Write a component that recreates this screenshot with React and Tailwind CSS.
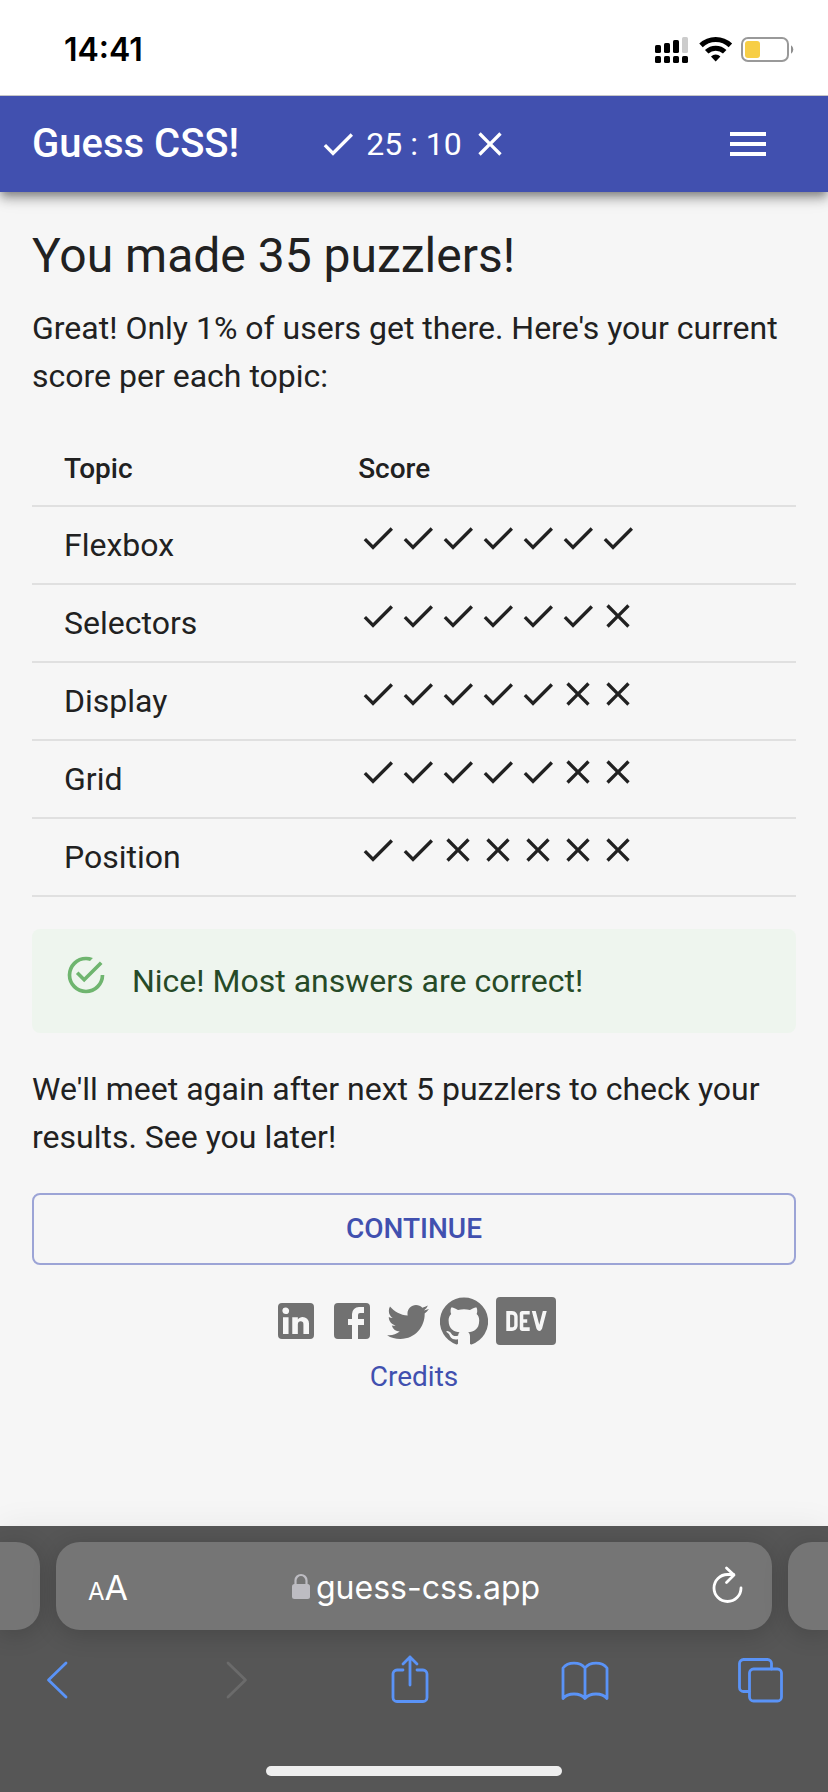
import React from "react";
import { FaDev } from "react-icons/fa";

const ICONS = {
  check: "M9 16.17L4.83 12l-1.42 1.41L9 19 21 7l-1.41-1.41z",
  close:
    "M19 6.41L17.59 5 12 10.59 6.41 5 5 6.41 10.59 12 5 17.59 6.41 19 12 13.41 17.59 19 19 17.59 13.41 12z",
  menu: "M3 18h18v-2H3v2zm0-5h18v-2H3v2zm0-7v2h18V6H3z",
  success:
    "M20 12a8 8 0 0 1-8 8 8 8 0 0 1-8-8 8 8 0 0 1 8-8c.76 0 1.5.11 2.2.31l1.57-1.57A9.822 9.822 0 0 0 12 2 10 10 0 0 0 2 12a10 10 0 0 0 10 10 10 10 0 0 0 10-10M7.91 10.08L6.5 11.5 11 16 21 6l-1.41-1.42L11 13.17l-3.09-3.09z",
  linkedin:
    "M19 3a2 2 0 0 1 2 2v14a2 2 0 0 1-2 2H5a2 2 0 0 1-2-2V5a2 2 0 0 1 2-2h14m-.5 15.5v-5.3a3.26 3.26 0 0 0-3.26-3.26c-.85 0-1.84.52-2.32 1.3v-1.11h-2.79v8.37h2.79v-4.93c0-.77.62-1.4 1.39-1.4a1.4 1.4 0 0 1 1.4 1.4v4.93h2.79M6.88 8.56a1.68 1.68 0 0 0 1.68-1.68c0-.93-.75-1.69-1.68-1.69a1.69 1.69 0 0 0-1.69 1.69c0 .93.76 1.68 1.69 1.68m1.39 9.94v-8.37H5.5v8.37h2.77z",
  facebook:
    "M5 3h14a2 2 0 0 1 2 2v14a2 2 0 0 1-2 2H5a2 2 0 0 1-2-2V5a2 2 0 0 1 2-2m13 2h-2.5A3.5 3.5 0 0 0 12 8.5V11h-2v3h2v7h3v-7h3v-3h-3V9a1 1 0 0 1 1-1h2V5z",
  twitter:
    "M22.46 6c-.77.35-1.6.58-2.46.69.88-.53 1.56-1.37 1.88-2.38-.83.5-1.75.85-2.72 1.05C18.37 4.5 17.26 4 16 4c-2.35 0-4.27 1.92-4.27 4.29 0 .34.04.67.11.98C8.28 9.09 5.11 7.38 3 4.79c-.37.63-.58 1.37-.58 2.15 0 1.49.75 2.81 1.91 3.56-.71 0-1.37-.2-1.95-.5v.03c0 2.08 1.48 3.82 3.44 4.21a4.22 4.22 0 0 1-1.93.07 4.28 4.28 0 0 0 4 2.98 8.521 8.521 0 0 1-5.33 1.84c-.34 0-.68-.02-1.02-.06C3.44 20.29 5.7 21 8.12 21 16 21 20.33 14.46 20.33 8.79c0-.19 0-.37-.01-.56.84-.6 1.56-1.36 2.14-2.23z",
  github:
    "M12 .3a12 12 0 0 0-3.8 23.4c.6.1.8-.3.8-.6v-2c-3.3.7-4-1.6-4-1.6-.6-1.4-1.4-1.8-1.4-1.8-1-.7.1-.7.1-.7 1.2 0 1.9 1.2 1.9 1.2 1 1.8 2.8 1.3 3.5 1 0-.8.4-1.3.7-1.6-2.7-.3-5.5-1.3-5.5-6 0-1.2.5-2.3 1.3-3.1-.2-.4-.6-1.6 0-3.2 0 0 1-.3 3.4 1.2a11.5 11.5 0 0 1 6 0c2.3-1.5 3.3-1.2 3.3-1.2.6 1.6.2 2.8 0 3.2.9.8 1.3 1.9 1.3 3.2 0 4.6-2.8 5.6-5.5 5.9.5.4.9 1 .9 2.2v3.3c0 .3.1.7.8.6A12 12 0 0 0 12 .3",
};

function Icon({ name, className }) {
  return (
    <svg viewBox="0 0 24 24" fill="currentColor" aria-hidden="true" className={`shrink-0 ${className}`}>
      <path d={ICONS[name]} />
    </svg>
  );
}

function StatusBar() {
  return (
    <div className="relative z-10 flex h-24 items-center justify-between border-b border-[#c6c6c8] bg-white pt-1 pr-8 pl-16 font-['Inter',sans-serif] text-black">
      <span className="text-[32px] leading-10 font-semibold">14:41</span>
      <svg viewBox="0 0 142 28" className="h-7 w-[142px]" aria-hidden="true">
        <g>
          <rect x="1" y="9" width="6" height="8" rx="1.6" />
          <rect x="10" y="7" width="6" height="10" rx="1.6" />
          <rect x="19" y="4" width="6" height="13" rx="1.6" />
          <rect x="28" y="1" width="6" height="16" rx="1.6" fill="#cccccc" />
          <rect x="1" y="20" width="6" height="7" rx="1.6" />
          <rect x="10" y="20" width="6" height="7" rx="1.6" />
          <rect x="19" y="20" width="6" height="7" rx="1.6" />
          <rect x="28" y="20" width="6" height="7" rx="1.6" />
        </g>
        <g fill="none" stroke="#000" strokeWidth="5">
          <path d="M47 9.4a21.2 21.2 0 0 1 29.4 0" />
          <path d="M52.7 15.8a13 13 0 0 1 18 0" />
        </g>
        <path d="M61.7 25.5 57 20.5a6.8 6.8 0 0 1 9.4 0z" />
        <rect x="88" y="2" width="46" height="23" rx="6" fill="none" stroke="#999" strokeWidth="2" />
        <rect x="91" y="5" width="15" height="17" rx="3" fill="#f7ce46" />
        <path d="M137 9.3a5 5 0 0 1 0 8.4z" fill="#8e8e8e" />
      </svg>
    </div>
  );
}

function AppBar() {
  return (
    <header className="relative grid h-24 grid-cols-[1fr_auto_1fr] items-center bg-[#4150af] px-8 text-white shadow-[0_4px_8px_-2px_rgba(0,0,0,0.3),0_8px_10px_rgba(0,0,0,0.2),0_2px_20px_rgba(0,0,0,0.14)]">
      <h1 className="text-[40px] leading-16 font-medium whitespace-nowrap">Guess CSS!</h1>
      <p className="flex items-center gap-2 text-[32px] leading-12 whitespace-nowrap">
        <Icon name="check" className="size-10" />
        25 : 10
        <Icon name="close" className="size-10" />
      </p>
      <button type="button" aria-label="Menu" className="justify-self-end p-6">
        <Icon name="menu" className="size-12" />
      </button>
    </header>
  );
}

const SCORES = [
  { topic: "Flexbox", right: 7 },
  { topic: "Selectors", right: 6 },
  { topic: "Display", right: 5 },
  { topic: "Grid", right: 5 },
  { topic: "Position", right: 2 },
];
const ROUNDS = [0, 1, 2, 3, 4, 5, 6];

function ScoreTable() {
  return (
    <table className="mt-8 w-full table-fixed border-collapse text-left">
      <thead>
        <tr className="h-[74px] border-b-2 border-[#e0e0e0] text-[28px] leading-12">
          <th scope="col" className="w-[38.5%] px-8 font-medium">Topic</th>
          <th scope="col" className="px-8 font-medium">Score</th>
        </tr>
      </thead>
      <tbody>
        {SCORES.map(({ topic, right }) => (
          <tr key={topic} className="h-[78px] border-b-2 border-[#e0e0e0] text-[32px] leading-12">
            <td className="px-8">{topic}</td>
            <td className="px-8 pt-[11px] align-top">
              <div className="flex">
                {ROUNDS.map((i) => (
                  <Icon key={i} name={i < right ? "check" : "close"} className="size-10" />
                ))}
              </div>
            </td>
          </tr>
        ))}
      </tbody>
    </table>
  );
}

const SOCIAL = [
  { name: "linkedin", label: "LinkedIn" },
  { name: "facebook", label: "Facebook" },
  { name: "twitter", label: "Twitter" },
  { name: "github", label: "GitHub" },
];

function Footer() {
  return (
    <footer className="mt-8 flex flex-col items-center gap-3">
      <div className="flex gap-2 text-[#717171]">
        {SOCIAL.map(({ name, label }) => (
          <a key={name} href="#" aria-label={label}>
            <Icon name={name} className="size-12" />
          </a>
        ))}
        <a href="#" aria-label="DEV" className="w-15 overflow-hidden rounded-sm border-x-4 border-[#717171]">
          <FaDev viewBox="7 56 434 400" className="h-12 w-full" />
        </a>
      </div>
      <a href="#" className="text-[28px] leading-10 text-[#4150af]">Credits</a>
    </footer>
  );
}

function ToolbarButton({ label, muted, children }) {
  return (
    <button type="button" aria-label={label} disabled={muted} className={muted ? "text-[#6b6b6b]" : "text-[#5a93f7]"}>
      <svg
        viewBox="0 0 48 48"
        className="size-12 overflow-visible"
        fill="none"
        stroke="currentColor"
        strokeWidth="2.8"
        strokeLinecap="round"
        strokeLinejoin="round"
        aria-hidden="true"
      >
        {children}
      </svg>
    </button>
  );
}

function BrowserBar() {
  return (
    <div className="relative bg-[#565656] pt-4 pb-4 font-['Inter',sans-serif] text-white shadow-[0_0_32px_rgba(0,0,0,0.06)]">
      <div className="flex h-22 gap-4">
        <div className="w-10 rounded-r-3xl bg-[#757575] shadow-[0_4px_24px_rgba(0,0,0,0.18)]" />
        <div className="grid flex-1 grid-cols-[1fr_auto_1fr] items-center rounded-3xl bg-[#757575] pt-1 pr-7 pl-8 shadow-[0_4px_24px_rgba(0,0,0,0.18)]">
          <button type="button" aria-label="Page settings" className="flex items-baseline justify-self-start pt-1">
            <span className="text-2xl leading-10">A</span>
            <span className="text-[34px] leading-10">A</span>
          </button>
          <p className="flex items-center gap-1.5 text-[32px] leading-10">
            <svg viewBox="0 0 18 26" className="mb-1 h-[26px] w-[18px]" aria-hidden="true">
              <path d="M3.5 12V7.5a5.5 5.5 0 0 1 11 0V12" fill="none" stroke="#bdbcc2" strokeWidth="2.2" />
              <rect x="0" y="11" width="18" height="15" rx="2.5" fill="#bdbcc2" />
            </svg>
            guess-css.app
          </p>
          <button type="button" aria-label="Reload" className="justify-self-end pb-2">
            <svg
              viewBox="0 0 32 38"
              className="h-[38px] w-8"
              fill="none"
              stroke="currentColor"
              strokeWidth="2.8"
              strokeLinecap="round"
              strokeLinejoin="round"
              aria-hidden="true"
            >
              <path d="M29 23a13.5 13.5 0 1 1-13.5-13.5h6" />
              <path d="M14.5 3l7.5 7-7.5 7.5" />
            </svg>
          </button>
        </div>
        <div className="w-10 rounded-l-3xl bg-[#757575] shadow-[0_4px_24px_rgba(0,0,0,0.18)]" />
      </div>
      <div className="mt-6 flex justify-between pr-11 pl-8">
        <ToolbarButton label="Back">
          <path d="M34 9 16.5 26 34 43" />
        </ToolbarButton>
        <ToolbarButton label="Forward" muted>
          <path d="M20 9l17.5 17L20 43" />
        </ToolbarButton>
        <ToolbarButton label="Share">
          <path d="M19 16h-6a4 4 0 0 0-4 4v23.5a4 4 0 0 0 4 4h26a4 4 0 0 0 4-4V20a4 4 0 0 0-4-4h-6" />
          <path d="M26 31V3m-7 7 7-7 7 7" />
        </ToolbarButton>
        <ToolbarButton label="Bookmarks">
          <path d="M25 14c-5-6.5-17-6.5-22 0v30.5c5-6 17-6 22 0 5-6 17-6 22 0V14c-5-6.5-17-6.5-22 0zm0 0v30" />
        </ToolbarButton>
        <ToolbarButton label="Tabs">
          <rect x="13.5" y="15" width="32" height="32" rx="4" />
          <path d="M13 37.5H7.5a4 4 0 0 1-4-4v-24a4 4 0 0 1 4-4h24a4 4 0 0 1 4 4V15" />
        </ToolbarButton>
      </div>
      <div className="mx-auto mt-16 h-[10px] w-[296px] rounded-full bg-[#eeeeee]" />
    </div>
  );
}

export default function App() {
  return (
    <div className="flex min-h-screen flex-col bg-[#f6f6f6] font-['Roboto',sans-serif] text-[#212121]">
      <StatusBar />
      <AppBar />
      <main className="flex-1 px-8 py-8">
        <h2 className="text-[48px] leading-16">You made 35 puzzlers!</h2>
        <p className="mt-4 text-[32px] leading-12">
          Great! Only 1% of users get there. Here's your current score per each topic:
        </p>
        <ScoreTable />
        <div role="alert" className="mt-8 flex gap-6 rounded-lg bg-[#eef5ee] px-8 py-3 text-[32px] leading-12 text-[#264a27]">
          <Icon name="success" className="mt-3 size-11 text-[#6fb56f]" />
          <p className="py-4">Nice! Most answers are correct!</p>
        </div>
        <p className="mt-8 text-[32px] leading-12">
          We'll meet again after next 5 puzzlers to check your results. See you later!
        </p>
        <button
          type="button"
          className="mt-8 h-18 w-full rounded-lg border-2 border-[#9ca4d6] text-[28px] leading-12 font-medium text-[#4150af] uppercase"
        >
          Continue
        </button>
        <Footer />
      </main>
      <BrowserBar />
    </div>
  );
}
